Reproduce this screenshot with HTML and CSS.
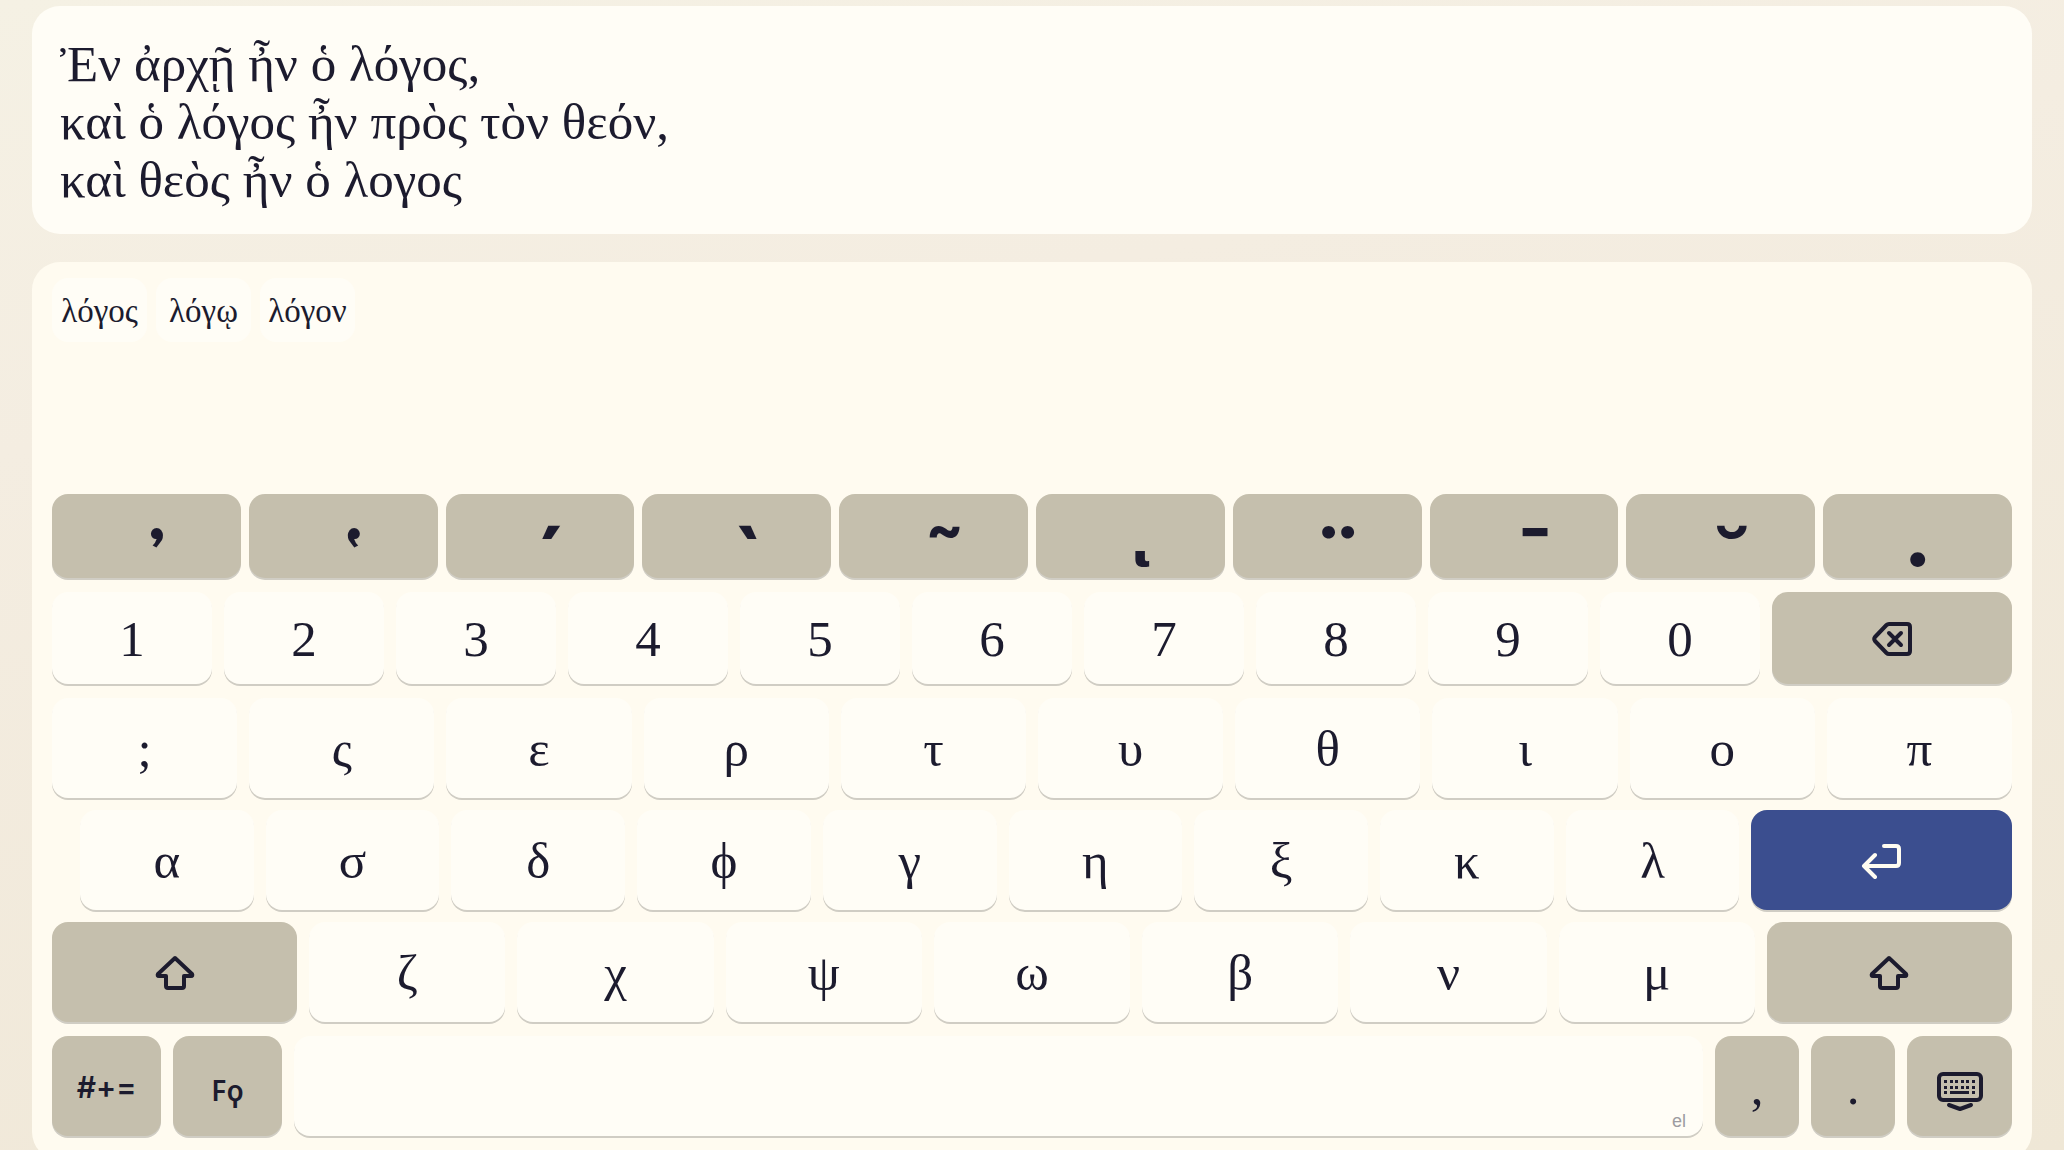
FILE: index.html
```html
<!DOCTYPE html>
<html lang="en">
<head>
    <meta charset="UTF-8">
    <meta name="viewport" content="width=device-width, initial-scale=1.0">
    <title>Polytonic Greek Keyboard</title>
    <link rel="stylesheet" href="styles.css">
</head>

<body>
    <textarea class="editor" rows="3" lang="el" spellcheck="false" aria-label="Greek text">Ἐν ἀρχῇ ἦν ὁ λόγος,
καὶ ὁ λόγος ἦν πρὸς τὸν θεόν,
καὶ θεὸς ἦν ὁ λογος</textarea>

    <main class="keyboard">
        <div class="suggestions" lang="el">
            <button class="suggestion">λόγος</button>
            <button class="suggestion">λόγῳ</button>
            <button class="suggestion">λόγον</button>
        </div>

        <!-- Diacritics -->
        <div class="row row-marks">
            <button class="key mark breathing" aria-label="Smooth breathing">᾿</button>
            <button class="key mark breathing" aria-label="Rough breathing">῾</button>
            <button class="key mark" aria-label="Acute">´</button>
            <button class="key mark" aria-label="Grave">`</button>
            <button class="key mark" aria-label="Circumflex">˜</button>
            <button class="key mark subscript" aria-label="Iota subscript">ͺ</button>
            <button class="key mark" aria-label="Diaeresis">¨</button>
            <button class="key mark" aria-label="Macron">¯</button>
            <button class="key mark" aria-label="Breve">˘</button>
            <button class="key mark dot-below" aria-label="Dot below">.</button>
        </div>

        <div class="row row-numbers">
            <button class="key">1</button>
            <button class="key">2</button>
            <button class="key">3</button>
            <button class="key">4</button>
            <button class="key">5</button>
            <button class="key">6</button>
            <button class="key">7</button>
            <button class="key">8</button>
            <button class="key">9</button>
            <button class="key">0</button>
            <button class="key special" aria-label="Backspace">
                <svg class="icon" width="42" height="36" viewBox="0 0 42 36">
                    <path d="M18 3H36Q39 3 39 6V30Q39 33 36 33H18Q16.500 33 15.500 32L4 20Q2.500 18 4 16L15.500 4Q16.500 3 18 3Z"/>
                    <path d="M18 12L30 24M30 12L18 24"/>
                </svg>
            </button>
        </div>

        <div class="row row-top" lang="el">
            <button class="key">;</button>
            <button class="key">ς</button>
            <button class="key">ε</button>
            <button class="key">ρ</button>
            <button class="key">τ</button>
            <button class="key">υ</button>
            <button class="key">θ</button>
            <button class="key">ι</button>
            <button class="key">ο</button>
            <button class="key">π</button>
        </div>

        <div class="row row-home" lang="el">
            <button class="key">α</button>
            <button class="key">σ</button>
            <button class="key">δ</button>
            <button class="key">ϕ</button>
            <button class="key">γ</button>
            <button class="key">η</button>
            <button class="key">ξ</button>
            <button class="key">κ</button>
            <button class="key">λ</button>
            <button class="key enter" aria-label="Enter">
                <svg class="icon" width="42" height="36" viewBox="0 0 42 36">
                    <path d="M23 3H35Q38 3 38 6V20Q38 23 35 23H3M14 12L3 23L14 34"/>
                </svg>
            </button>
        </div>

        <div class="row row-bottom" lang="el">
            <button class="key special" aria-label="Shift">
                <svg class="icon" width="42" height="36" viewBox="0 0 42 36">
                    <path d="M21 3L38 19Q39 21 37 21H30V31Q30 33 28 33H14Q12 33 12 31V21H5Q3 21 4 19Z"/>
                </svg>
            </button>
            <button class="key">ζ</button>
            <button class="key">χ</button>
            <button class="key">ψ</button>
            <button class="key">ω</button>
            <button class="key">β</button>
            <button class="key">ν</button>
            <button class="key">μ</button>
            <button class="key special" aria-label="Shift">
                <svg class="icon" width="42" height="36" viewBox="0 0 42 36">
                    <path d="M21 3L38 19Q39 21 37 21H30V31Q30 33 28 33H14Q12 33 12 31V21H5Q3 21 4 19Z"/>
                </svg>
            </button>
        </div>

        <div class="row row-space">
            <button class="key special layer">#+=</button>
            <button class="key special layer archaic">Fϙ</button>
            <button class="key space" aria-label="Space"><span>el</span></button>
            <button class="key special">,</button>
            <button class="key special">.</button>
            <button class="key special" aria-label="Hide keyboard">
                <svg class="icon" width="48" height="52" viewBox="0 -10 48 52">
                    <rect x="3" y="3" width="42" height="26" rx="4"/>
                    <path class="dots" d="M8 9h3v3h-3zM14 9h3v3h-3zM19 9h3v3h-3zM25 9h3v3h-3zM30 9h3v3h-3zM36 9h3v3h-3zM8 15h3v3h-3zM14 15h3v3h-3zM19 15h3v3h-3zM25 15h3v3h-3zM30 15h3v3h-3zM36 15h3v3h-3zM8 20h3v3h-3zM14 20h19v3h-19zM36 20h3v3h-3z"/>
                    <path d="M13 34L24 38L35 34"/>
                </svg>
            </button>
        </div>
    </main>
</body>
</html>
```
FILE: styles.css
```css
* {
    box-sizing: border-box;
}
body {
    display: flex;
    flex-direction: column;
    gap: 28px;
    height: 100vh;
    margin: 0;
    padding: 6px 32px;
    overflow: hidden;
    background: linear-gradient(170deg, #f5f1e4, #f4ede1 30%, #efe7d6);
    color: #1c1b2e;
    font-family: "Liberation Serif", "Times New Roman", serif;
}
button, textarea {
    margin: 0;
    border: none;
    color: inherit;
    font-family: inherit;
}
.editor {
    display: block;
    flex-shrink: 0;
    width: 100%;
    padding: 29px 28px 25px;
    border-radius: 28px;
    background: #fffdf6;
    font-size: 51px;
    line-height: 58px;
    outline: none;
    overflow: hidden;
    resize: none;
}
.keyboard {
    flex-shrink: 0;
    padding: 16px 20px 24px;
    border-radius: 28px;
    background: #fffbf0;
}
.suggestions {
    display: flex;
    align-items: flex-start;
    gap: 9px;
    height: 200px;
    margin-bottom: 16px;
}
.suggestion {
    width: 95px;
    height: 64px;
    padding: 2px 0 0;
    border-radius: 16px;
    background: #fffdf6;
    font-size: 33px;
}
.row {
    display: grid;
    gap: 12px;
    height: 100px;
    margin-bottom: 12px;
}
.row-marks {
    grid-template-columns: repeat(10, 1fr);
    gap: 8px;
    height: 84px;
    margin-bottom: 14px;
}
.row-numbers {
    grid-template-columns: repeat(10, 2fr) 3fr;
    height: 92px;
    margin-bottom: 14px;
}
.row-top {
    grid-template-columns: repeat(10, 1fr);
}
.row-home {
    grid-template-columns: repeat(9, 2fr) 3fr;
    padding-left: 28px;
}
.row-bottom {
    grid-template-columns: 5fr repeat(7, 4fr) 5fr;
    margin-bottom: 14px;
}
.row-space {
    grid-template-columns: 109px 109px 1fr 84px 84px 105px;
    margin-bottom: 0;
}
.key {
    display: flex;
    align-items: center;
    justify-content: center;
    min-width: 0;
    padding: 2px 0 0;
    border-radius: 16px;
    background: #fffdf6;
    box-shadow: 0 2px 0 #d0cdc4;
    font-size: 51px;
}
.mark, .special {
    background: #c5bfad;
}
/* spacing accents sit high in the line, so they are pushed down */
.mark {
    padding: 50px 0 0 22px;
    font-family: Inter, sans-serif;
    font-size: 88px;
    font-weight: bold;
    line-height: 8px;
}
.breathing {
    padding-top: 64px;
    font-family: "DejaVu Serif", serif;
    font-size: 80px;
}
.subscript {
    padding-top: 0;
    padding-bottom: 45px;
}
.dot-below {
    padding: 0 0 4px;
}
.enter {
    background: #3b4e8f;
    color: #fffcf1;
}
.layer {
    font-family: Inter, "Noto Sans", sans-serif;
    font-size: 30px;
    font-weight: 600;
}
.archaic {
    padding-top: 8px;
    font-family: "Noto Sans", sans-serif;
    font-size: 28px;
}
.space {
    align-items: flex-end;
    justify-content: flex-end;
    padding: 4px 17px;
    color: #9d9ca1;
    font-family: "Liberation Sans", Arial, sans-serif;
    font-size: 18px;
}
.icon {
    display: block;
    fill: none;
    stroke: currentColor;
    stroke-width: 4;
    stroke-linecap: round;
    stroke-linejoin: round;
}
.dots {
    fill: currentColor;
    stroke: none;
}
```
